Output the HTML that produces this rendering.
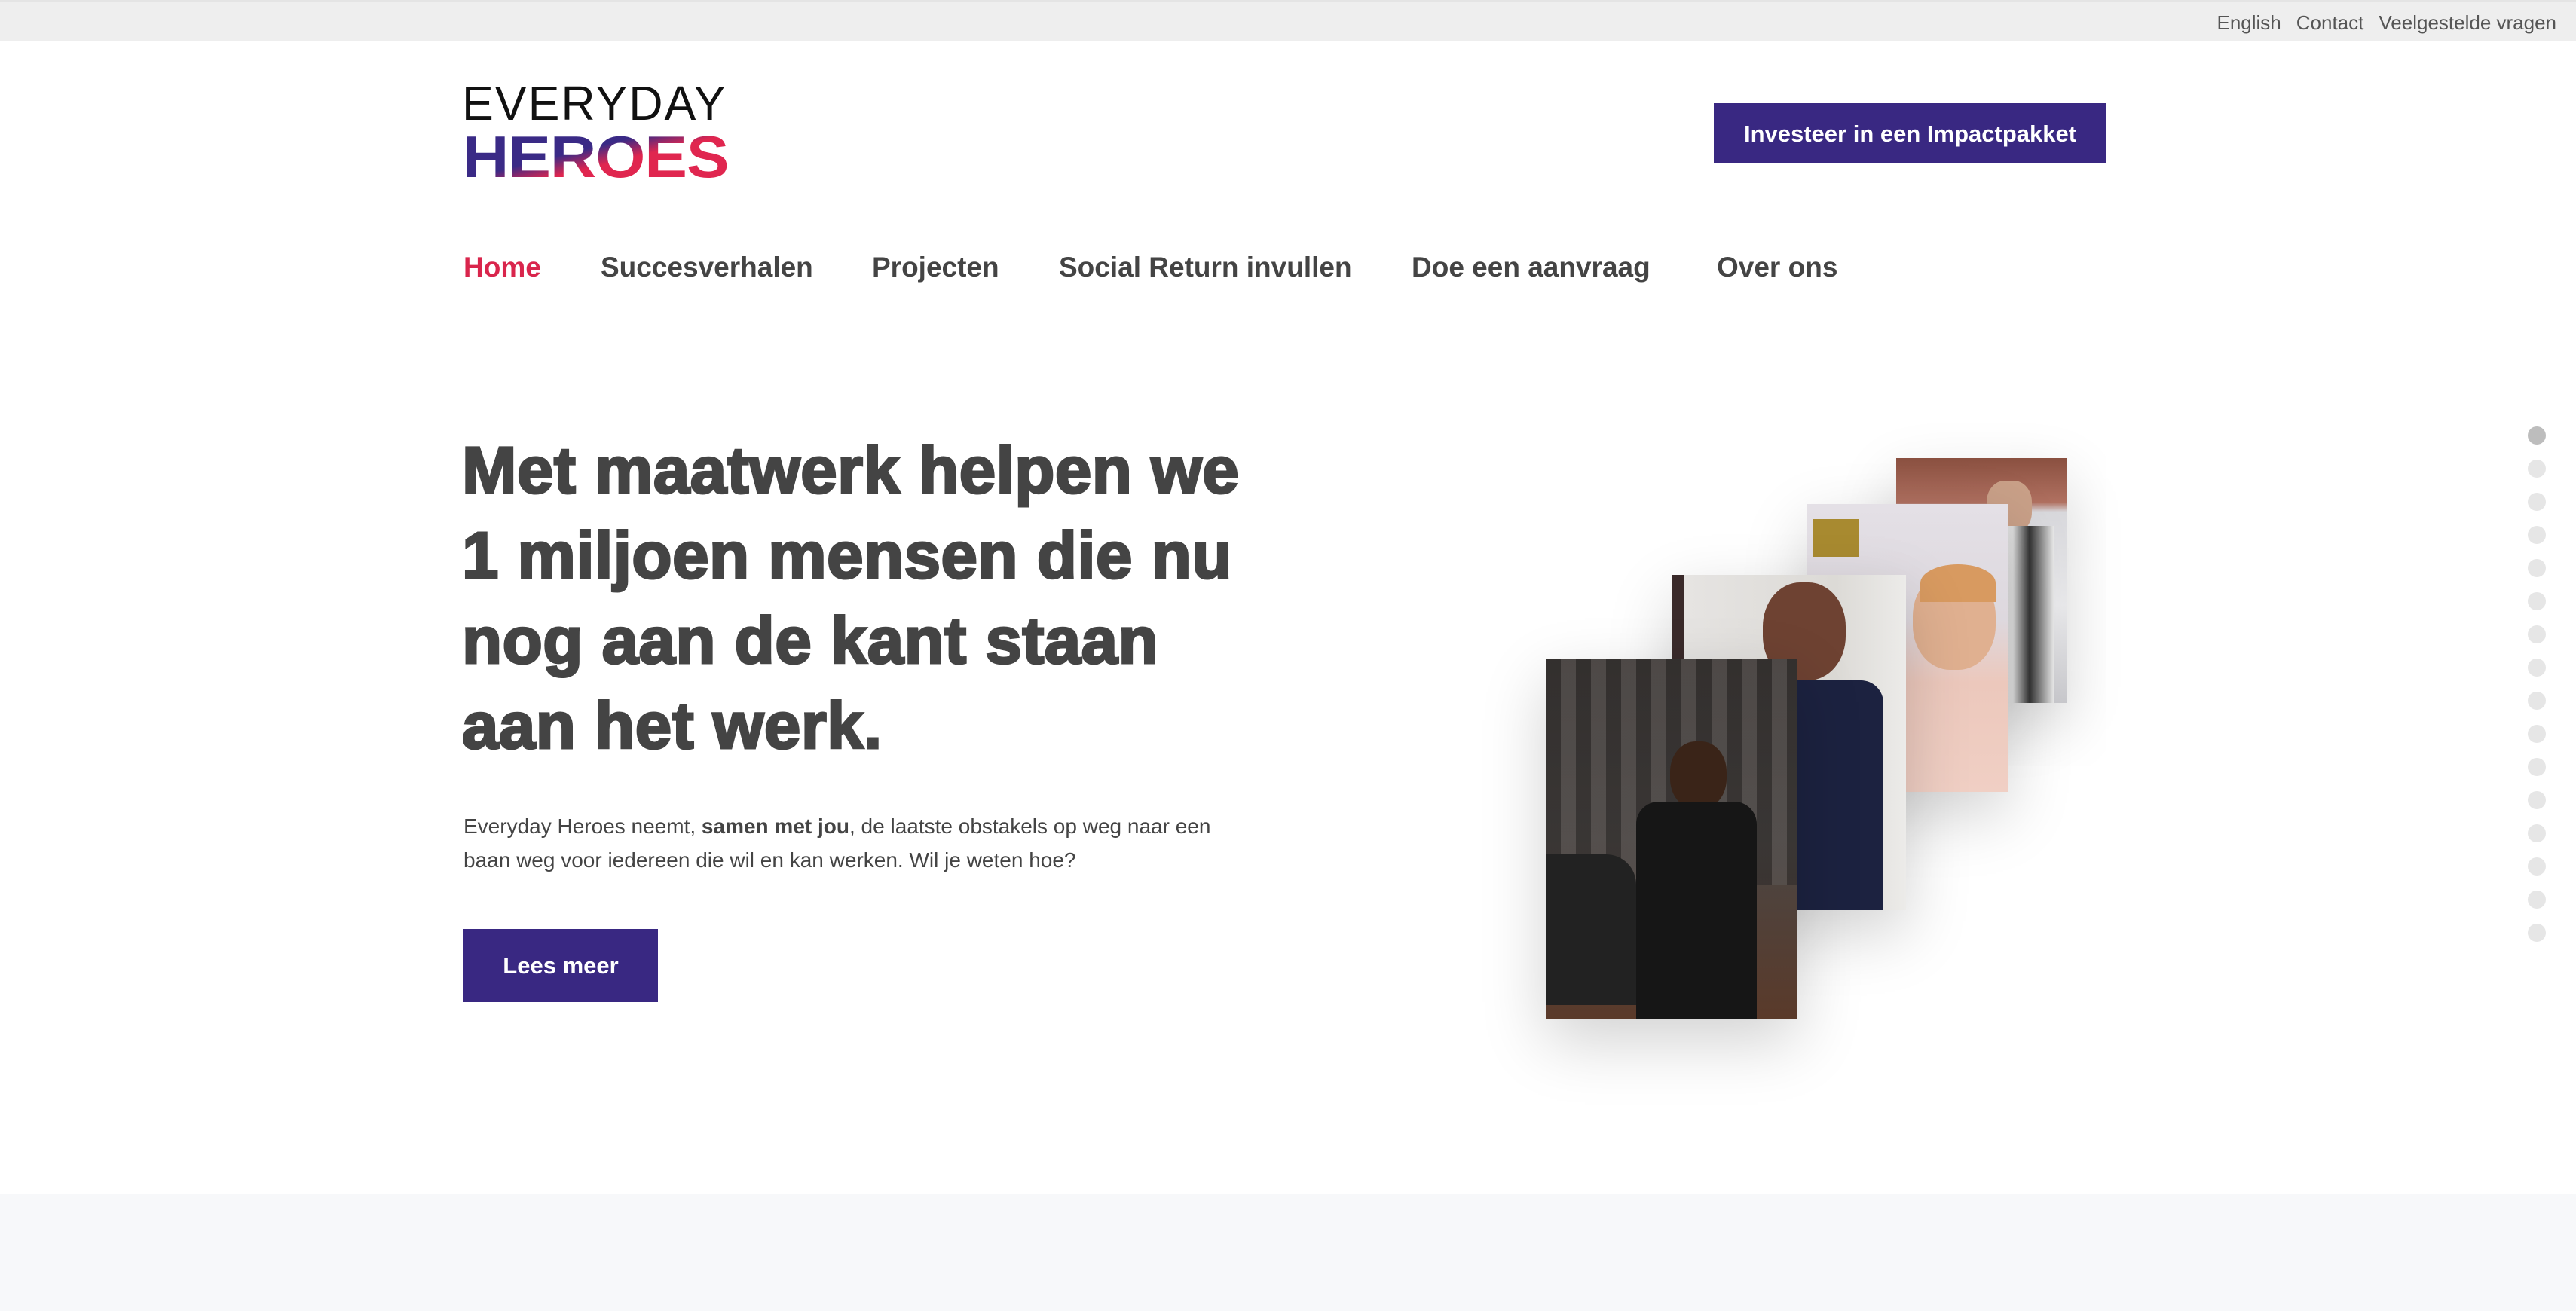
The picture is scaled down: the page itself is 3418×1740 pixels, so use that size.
<!DOCTYPE html>
<html><head><meta charset="utf-8">
<style>
*{margin:0;padding:0;box-sizing:border-box}
html,body{width:3418px;height:1740px;overflow:hidden;background:#fff;font-family:"Liberation Sans",sans-serif;color:#444}
.top{position:absolute;left:0;top:0;width:3418px;height:54px;background:#eeeeee;border-top:3px solid #e4e4e4}
.top div{position:absolute;right:26px;top:12px;font-size:26px;color:#555}
.top span{margin-left:20px}
.logo1{position:absolute;left:613px;top:100px;font-size:64px;letter-spacing:2px;color:#111;transform:scaleX(0.98);transform-origin:left}
.logo2{position:absolute;left:614px;top:168px;font-size:78px;font-weight:900;letter-spacing:-1px;line-height:80px;transform:scaleX(1.09);transform-origin:left;
background:linear-gradient(165deg,#3a2a86 0%,#3a2a86 42%,#e0264f 58%,#e0264f 100%);-webkit-background-clip:text;background-clip:text;color:transparent}
.btn1{position:absolute;left:2274px;top:137px;width:521px;height:80px;background:#392882;color:#fff;font-size:31px;font-weight:bold;text-align:center;line-height:82px}
.nav{position:absolute;top:334px;font-size:37px;font-weight:bold;color:#444}
h1{position:absolute;left:613px;top:568px;font-size:87px;line-height:113px;font-weight:900;color:#444;letter-spacing:0.5px;-webkit-text-stroke:3px #444}
p{position:absolute;left:615px;top:1074px;font-size:28px;line-height:45px;color:#444;width:1010px}
.btn2{position:absolute;left:615px;top:1233px;width:258px;height:97px;background:#392882;color:#fff;font-size:31px;font-weight:bold;text-align:center;line-height:97px}
.bottom{position:absolute;left:0;top:1585px;width:3418px;height:155px;background:#f7f8fa}
.ph{position:absolute;box-shadow:0 30px 80px rgba(0,0,0,0.18);overflow:hidden}
.dot{position:absolute;left:3354px;width:24px;height:24px;border-radius:50%;background:#e6e6e6}
</style></head><body>
<div class="top"><div>English<span>Contact</span><span>Veelgestelde vragen</span></div></div>
<div class="logo1">EVERYDAY</div>
<div class="logo2">HEROES</div>
<div class="btn1">Investeer in een Impactpakket</div>
<div class="nav" style="left:615px;color:#d9254c">Home</div>
<div class="nav" style="left:797px">Succesverhalen</div>
<div class="nav" style="left:1157px">Projecten</div>
<div class="nav" style="left:1405px">Social Return invullen</div>
<div class="nav" style="left:1873px">Doe een aanvraag</div>
<div class="nav" style="left:2278px">Over ons</div>
<h1>Met maatwerk helpen we<br>1 miljoen mensen die nu<br>nog aan de kant staan<br>aan het werk.</h1>
<p>Everyday Heroes neemt, <b>samen met jou</b>, de laatste obstakels op weg naar een baan weg voor iedereen die wil en kan werken. Wil je weten hoe?</p>
<div class="btn2">Lees meer</div>

<div class="ph" style="left:2516px;top:608px;width:226px;height:325px;background:linear-gradient(180deg,#8a5040 0%,#b07060 18%,#d8d8dc 22%,#e8e8ea 60%,#c8c8cc 100%)">
 <div style="position:absolute;left:120px;top:30px;width:60px;height:70px;border-radius:40%;background:#c9a088"></div>
 <div style="position:absolute;left:100px;top:90px;width:110px;height:235px;background:linear-gradient(90deg,#eee,#ddd 50%,#333 70%,#eee)"></div>
</div>
<div class="ph" style="left:2398px;top:669px;width:266px;height:382px;background:linear-gradient(180deg,#e4e0e6 0%,#ddd8de 40%,#ecc8bc 62%,#f0cfc4 100%)">
 <div style="position:absolute;left:8px;top:20px;width:60px;height:50px;background:#a88a30"></div>
 <div style="position:absolute;left:140px;top:90px;width:110px;height:130px;border-radius:45%;background:#e0b090"></div>
 <div style="position:absolute;left:150px;top:80px;width:100px;height:50px;border-radius:50% 50% 0 0;background:#d89a60"></div>
</div>
<div class="ph" style="left:2219px;top:763px;width:310px;height:445px;background:linear-gradient(90deg,#3a2a2a 0 5%,#e6e4e2 5%,#dcdad6 70%,#ecebe9 100%)">
 <div style="position:absolute;left:120px;top:10px;width:110px;height:130px;border-radius:45%;background:#6e4232"></div>
 <div style="position:absolute;left:70px;top:140px;width:210px;height:305px;background:#1c2240;border-radius:30px 30px 0 0"></div>
</div>
<div class="ph" style="left:2051px;top:874px;width:334px;height:478px;background:linear-gradient(180deg,#3a3634 0%,#4a4644 50%,#5a3a2a 100%)">
 <div style="position:absolute;left:0;top:0;width:334px;height:300px;background:repeating-linear-gradient(90deg,#2e2b2a 0 20px,#5a5553 20px 40px);opacity:.6"></div>
 <div style="position:absolute;left:165px;top:110px;width:75px;height:90px;border-radius:45%;background:#3a2418"></div>
 <div style="position:absolute;left:120px;top:190px;width:160px;height:288px;background:#161616;border-radius:30px 30px 0 0"></div>
 <div style="position:absolute;left:0;top:260px;width:120px;height:200px;background:#222;border-radius:0 40px 0 0"></div>
</div>

<div class="dot" style="top:566px;background:#bdbdbd"></div>
<div class="dot" style="top:610px"></div>
<div class="dot" style="top:654px"></div>
<div class="dot" style="top:698px"></div>
<div class="dot" style="top:742px"></div>
<div class="dot" style="top:786px"></div>
<div class="dot" style="top:830px"></div>
<div class="dot" style="top:874px"></div>
<div class="dot" style="top:918px"></div>
<div class="dot" style="top:962px"></div>
<div class="dot" style="top:1006px"></div>
<div class="dot" style="top:1050px"></div>
<div class="dot" style="top:1094px"></div>
<div class="dot" style="top:1138px"></div>
<div class="dot" style="top:1182px"></div>
<div class="dot" style="top:1226px"></div>

<div class="bottom"></div>
</body></html>
